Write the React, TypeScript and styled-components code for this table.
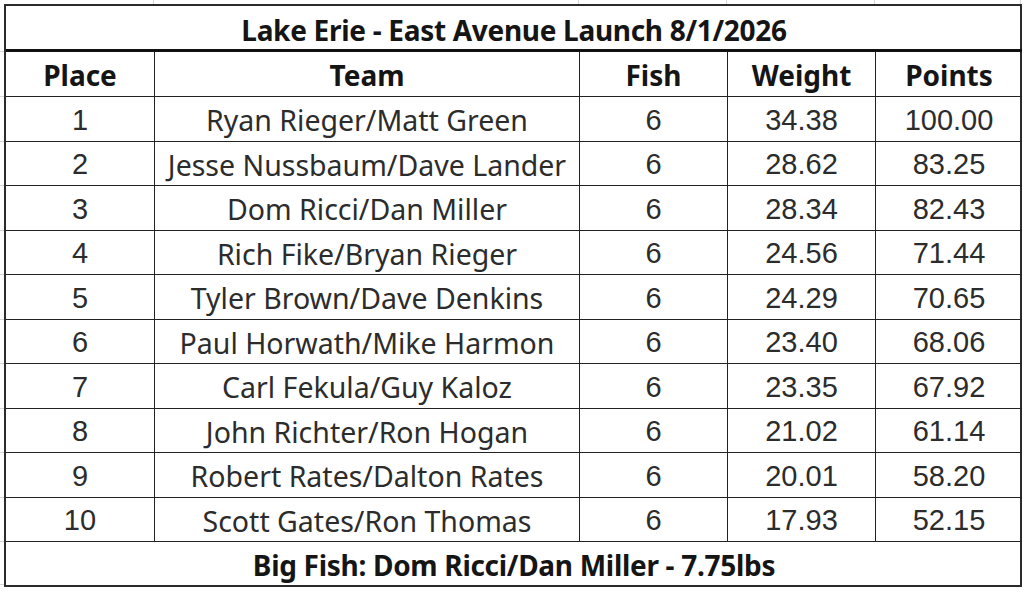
import React from "react";
import styled, { createGlobalStyle } from "styled-components";

const Global = createGlobalStyle`
  html, body { margin: 0; padding: 0; background: #ffffff; }
  #root { width: 1024px; height: 607px; overflow: hidden; }
`;

const COLS = "149px 425px 148px 148px 146px";
const ROW_H = 44.5;
const TITLE_H = 46;
const HEAD_H = 45;
const FOOT_H = 43;

const Page = styled.div`
  width: 1024px;
  height: 607px;
  background: #ffffff;
  display: flex;
  flex-direction: column;
`;

const TopGutter = styled.div`
  height: 5px;
  display: grid;
  grid-template-columns: 5px ${COLS};
`;

const GutterCol = styled.div`
  border-right: 1px solid #d6d6d6;
  box-sizing: border-box;
`;

const Body = styled.div`
  display: flex;
`;

const LeftGutter = styled.div`
  width: 5px;
  display: flex;
  flex-direction: column;
  padding-top: 1px;
`;

const GutterRow = styled.div<{ $h: number }>`
  height: ${(p) => p.$h}px;
  border-bottom: 1px solid #d6d6d6;
  box-sizing: border-box;
`;

const Table = styled.div`
  display: grid;
  grid-template-columns: ${COLS};
  grid-template-rows: ${TITLE_H}px ${HEAD_H}px repeat(10, ${ROW_H}px) ${FOOT_H}px;
  box-sizing: border-box;
  border: 2px solid #2b2b2b;
  width: 1018px;
  margin-left: -1px;
  margin-top: -1px;
`;

const Banner = styled.div<{ $thick?: boolean }>`
  grid-column: 1 / -1;
  display: flex;
  align-items: center;
  justify-content: center;
  box-sizing: border-box;
  border-bottom: ${(p) => (p.$thick ? "3px solid #111" : "none")};
  font-family: "Noto Sans", "Open Sans", sans-serif;
  font-weight: 700;
  font-size: 28px;
  color: #151515;
  letter-spacing: -0.3px;
  padding-top: ${(p) => (p.$thick ? "4px" : "2px")};
`;

const Cell = styled.div<{ $last?: boolean; $bold?: boolean; $num?: boolean }>`
  display: flex;
  align-items: center;
  justify-content: center;
  box-sizing: border-box;
  border-right: ${(p) => (p.$last ? "none" : "1.5px solid #222")};
  border-bottom: 1.5px solid #222;
  font-family: ${(p) =>
    p.$num && !p.$bold
      ? '"Liberation Sans", Arial, sans-serif'
      : '"Noto Sans", "Open Sans", sans-serif'};
  font-weight: ${(p) => (p.$bold ? 700 : 400)};
  font-size: ${(p) => (p.$bold ? "28px" : p.$num ? "29px" : "28.5px")};
  color: ${(p) => (p.$bold ? "#151515" : "#2c2c2c")};
  padding-top: ${(p) => (p.$bold ? "1px" : "3px")};
  white-space: nowrap;
`;

const rows: [string, string, string, string, string][] = [
  ["1", "Ryan Rieger/Matt Green", "6", "34.38", "100.00"],
  ["2", "Jesse Nussbaum/Dave Lander", "6", "28.62", "83.25"],
  ["3", "Dom Ricci/Dan Miller", "6", "28.34", "82.43"],
  ["4", "Rich Fike/Bryan Rieger", "6", "24.56", "71.44"],
  ["5", "Tyler Brown/Dave Denkins", "6", "24.29", "70.65"],
  ["6", "Paul Horwath/Mike Harmon", "6", "23.40", "68.06"],
  ["7", "Carl Fekula/Guy Kaloz", "6", "23.35", "67.92"],
  ["8", "John Richter/Ron Hogan", "6", "21.02", "61.14"],
  ["9", "Robert Rates/Dalton Rates", "6", "20.01", "58.20"],
  ["10", "Scott Gates/Ron Thomas", "6", "17.93", "52.15"],
];

const headers = ["Place", "Team", "Fish", "Weight", "Points"];
const gutterHeights = [TITLE_H, HEAD_H, ...rows.map(() => ROW_H), FOOT_H];

export default function App() {
  return (
    <>
      <Global />
      <Page>
        <TopGutter>
          <div />
          {headers.map((h) => (
            <GutterCol key={h} />
          ))}
        </TopGutter>
        <Body>
          <LeftGutter>
            {gutterHeights.map((h, i) => (
              <GutterRow key={i} $h={h} />
            ))}
          </LeftGutter>
          <Table>
            <Banner $thick>Lake Erie - East Avenue Launch 8/1/2026</Banner>
            {headers.map((h, i) => (
              <Cell key={h} $bold $last={i === headers.length - 1}>
                {h}
              </Cell>
            ))}
            {rows.map((r) =>
              r.map((v, i) => (
                <Cell key={r[0] + i} $num={i !== 1} $last={i === r.length - 1}>
                  {v}
                </Cell>
              ))
            )}
            <Banner>Big Fish: Dom Ricci/Dan Miller - 7.75lbs</Banner>
          </Table>
        </Body>
      </Page>
    </>
  );
}
